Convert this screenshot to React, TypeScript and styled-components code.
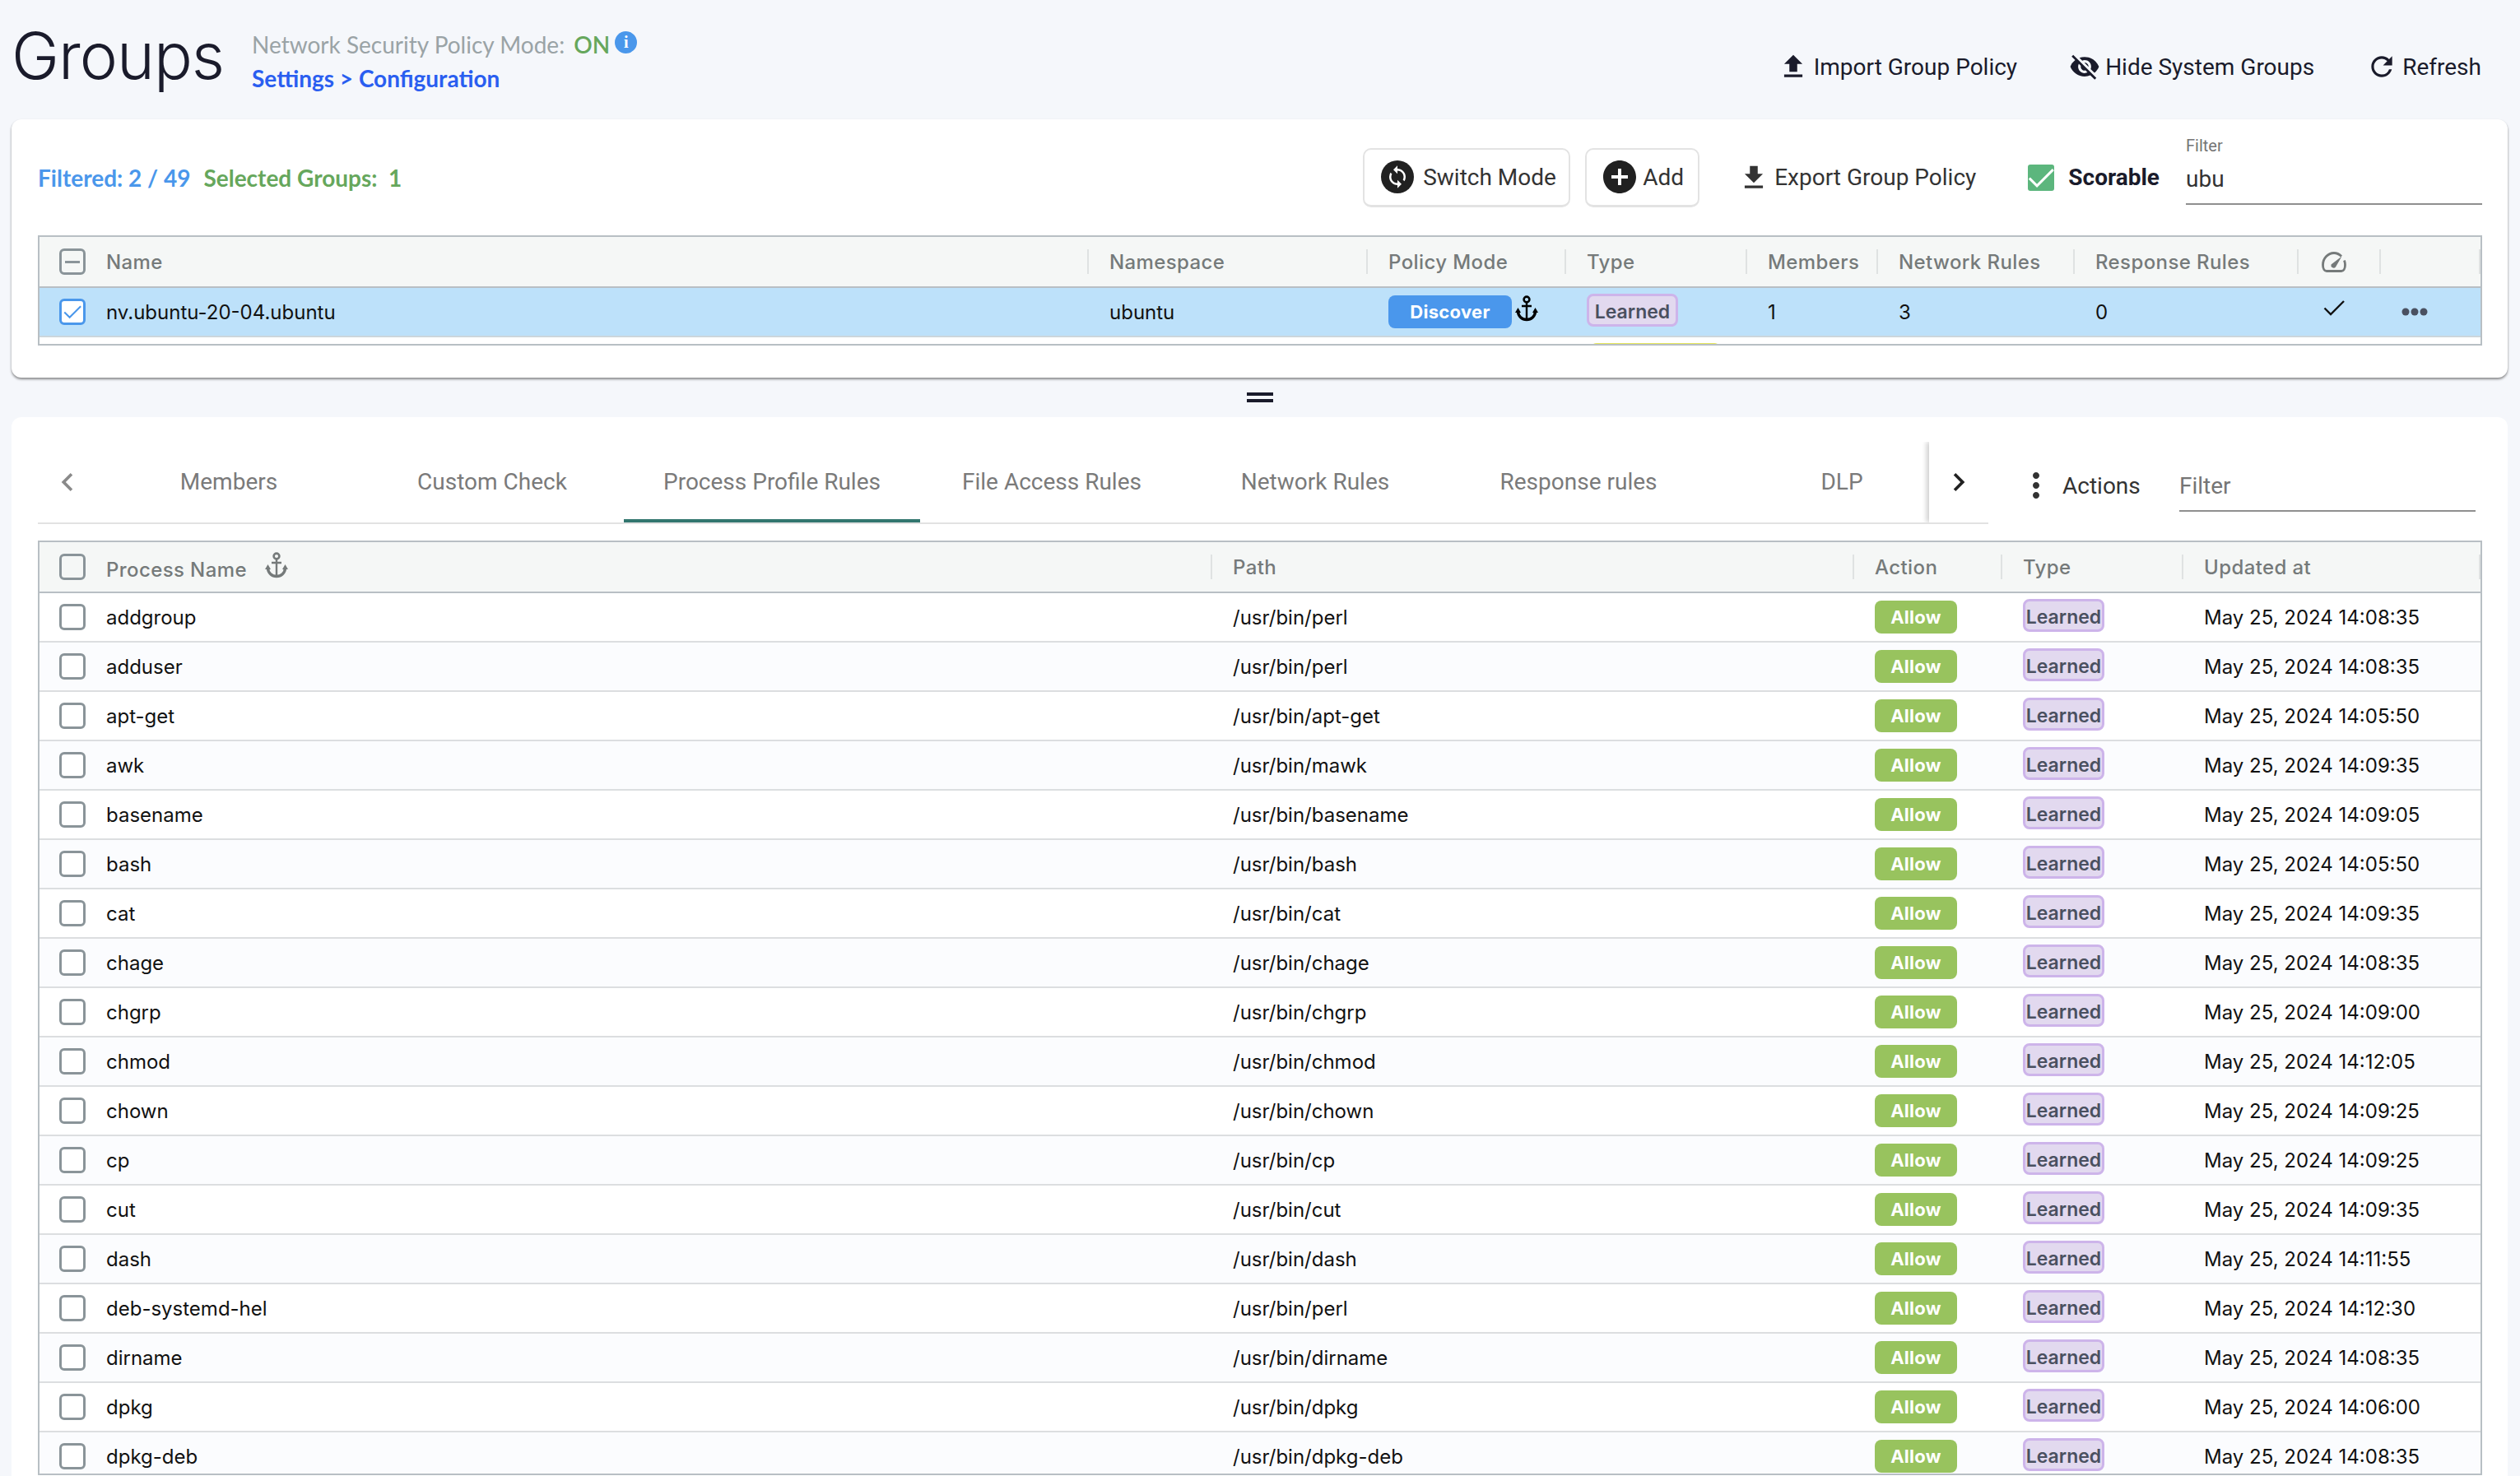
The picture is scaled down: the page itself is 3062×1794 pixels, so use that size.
import styled, { createGlobalStyle } from "styled-components";
import {
  MdAddCircle,
  MdChevronLeft,
  MdChevronRight,
  MdFileDownload,
  MdFileUpload,
  MdMoreVert,
  MdRefresh,
  MdSync,
  MdVisibilityOff,
} from "react-icons/md";

const GROUP_COLUMNS = "1275px 339px 241px 220px 159px 239px 272px 100px 121px";
const RULE_COLUMNS = "1425px 780px 180px 220px 361px";

const rules = [
  ["addgroup", "/usr/bin/perl", "May 25, 2024 14:08:35"],
  ["adduser", "/usr/bin/perl", "May 25, 2024 14:08:35"],
  ["apt-get", "/usr/bin/apt-get", "May 25, 2024 14:05:50"],
  ["awk", "/usr/bin/mawk", "May 25, 2024 14:09:35"],
  ["basename", "/usr/bin/basename", "May 25, 2024 14:09:05"],
  ["bash", "/usr/bin/bash", "May 25, 2024 14:05:50"],
  ["cat", "/usr/bin/cat", "May 25, 2024 14:09:35"],
  ["chage", "/usr/bin/chage", "May 25, 2024 14:08:35"],
  ["chgrp", "/usr/bin/chgrp", "May 25, 2024 14:09:00"],
  ["chmod", "/usr/bin/chmod", "May 25, 2024 14:12:05"],
  ["chown", "/usr/bin/chown", "May 25, 2024 14:09:25"],
  ["cp", "/usr/bin/cp", "May 25, 2024 14:09:25"],
  ["cut", "/usr/bin/cut", "May 25, 2024 14:09:35"],
  ["dash", "/usr/bin/dash", "May 25, 2024 14:11:55"],
  ["deb-systemd-hel", "/usr/bin/perl", "May 25, 2024 14:12:30"],
  ["dirname", "/usr/bin/dirname", "May 25, 2024 14:08:35"],
  ["dpkg", "/usr/bin/dpkg", "May 25, 2024 14:06:00"],
  ["dpkg-deb", "/usr/bin/dpkg-deb", "May 25, 2024 14:08:35"],
];

const tabs = ["Members", "Custom Check", "Process Profile Rules", "File Access Rules", "Network Rules", "Response rules", "DLP"];

const GlobalStyle = createGlobalStyle`
  html, body {
    margin: 0;
    height: 1794px;
    overflow: hidden;
    background: #f5f7fb;
    font-family: Roboto, sans-serif;
    color: #1a1b2b;
  }
`;

const Page = styled.div`
  width: 3062px;
  height: 1794px;
  padding: 0 15px 0 14px;
  box-sizing: border-box;
  overflow: hidden;
`;

const Header = styled.header`
  height: 145px;
  display: flex;
  align-items: flex-start;
`;

const Title = styled.h1`
  margin: 23px 0 0;
  width: 292px;
  font-family: Inter, sans-serif;
  font-weight: 300;
  font-size: 78px;
  line-height: 90px;
  letter-spacing: -1px;
  color: #1a1b2b;
`;

const Subtitle = styled.div`
  margin-top: 36px;
  font-family: Lato, sans-serif;
  font-size: 28px;
`;

const ModeLine = styled.div`
  display: flex;
  align-items: center;
  height: 36px;
  color: #9aa3a6;
`;

const ModeOn = styled.span`
  margin-left: 11px;
  color: #66a75c;
  font-weight: 600;
`;

const InfoDot = styled.span`
  margin: -6px 0 0 6px;
  width: 27px;
  height: 27px;
  border-radius: 50%;
  background: #4a97eb;
  color: #fff;
  font: 700 20px/27px "Liberation Serif", serif;
  text-align: center;
`;

const Crumb = styled.div`
  margin-top: 5px;
  color: #2a5ef0;
  font-weight: 700;
  line-height: 36px;
`;

const HeaderActions = styled.div`
  margin: 62px 32px 0 auto;
  display: flex;
  align-items: center;
  gap: 63px;
`;

const TextAction = styled.div`
  display: flex;
  align-items: center;
  gap: 6px;
  height: 38px;
  font-size: 28px;
  color: #1a1b2b;
  svg {
    flex: none;
  }
`;

const Card = styled.section`
  background: #fff;
  border-radius: 12px;
  padding: 0 31px 0 32px;
`;

const GroupsCard = styled(Card)`
  height: 314px;
  box-sizing: border-box;
  box-shadow: 0 2px 3px rgba(0, 0, 0, 0.45);
`;

const RulesCard = styled(Card)`
  height: 1300px;
`;

const Toolbar = styled.div`
  height: 141px;
  display: flex;
  align-items: center;
`;

const Counts = styled.div`
  display: flex;
  gap: 16px;
  font-family: Lato, sans-serif;
  font-weight: 700;
  font-size: 28px;
`;

const FilteredCount = styled.span`
  color: #4a97eb;
`;

const SelectedCount = styled.span`
  color: #66a75c;
  white-space: pre;
`;

const ToolbarActions = styled.div`
  margin-left: auto;
  align-self: stretch;
  display: flex;
  align-items: center;
`;

const OutlineButton = styled.button<{ $width: number }>`
  width: ${(p) => p.$width}px;
  height: 72px;
  box-sizing: border-box;
  margin-right: 18px;
  padding: 0 0 0 20px;
  display: flex;
  align-items: center;
  gap: 11px;
  background: #fff;
  border: 2px solid #e3e3e3;
  border-bottom-width: 3px;
  border-radius: 10px;
  font: 400 28px Roboto, sans-serif;
  color: #333;
`;

const RoundIcon = styled.span`
  width: 40px;
  height: 40px;
  border-radius: 50%;
  background: #212121;
  color: #fff;
  display: flex;
  align-items: center;
  justify-content: center;
`;

const PlusIcon = styled(MdAddCircle)`
  margin: -4px -7px -4px -4px;
  color: #212121;
`;

const ExportAction = styled(TextAction)`
  margin-left: 29px;
  color: #333;
`;

const ScorableBox = styled.span`
  margin-left: 63px;
  width: 32px;
  height: 32px;
  border-radius: 3px;
  background: #5cb67d;
  display: flex;
`;

const ScorableLabel = styled.span`
  margin-left: 17px;
  font-size: 28px;
  font-weight: 700;
  color: #1a1b2b;
`;

const FilterField = styled.div`
  align-self: flex-start;
  margin: 20px 0 0 32px;
  width: 360px;
  height: 84px;
  box-sizing: border-box;
  border-bottom: 2px solid #8f8f8f;
`;

const FilterLabel = styled.div`
  font-size: 20px;
  line-height: 24px;
  color: #757575;
`;

const FilterValue = styled.div`
  margin-top: 11px;
  font-size: 28px;
  line-height: 36px;
  color: #333;
`;

const TableFrame = styled.div<{ $height: number }>`
  height: ${(p) => p.$height}px;
  box-sizing: border-box;
  border: 2px solid #b8bfc4;
  overflow: hidden;
  font-family: Inter, sans-serif;
`;

const HeadRow = styled.div<{ $columns: string }>`
  display: grid;
  grid-template-columns: ${(p) => p.$columns};
  align-items: center;
  height: 62px;
  box-sizing: border-box;
  background: #f5f7f6;
  border-bottom: 2px solid #b8bfc4;
`;

const HeadCell = styled.div`
  height: 30px;
  box-sizing: border-box;
  padding-left: 25px;
  display: flex;
  align-items: center;
  border-right: 2px solid #dfe2e2;
  font-size: 24px;
  font-weight: 500;
  letter-spacing: 0.4px;
  color: #757a7a;
  white-space: nowrap;
`;

const NameHead = styled(HeadCell)`
  padding-left: 24px;
  gap: 25px;
`;

const GaugeHead = styled(HeadCell)`
  padding-left: 28px;
`;

const ProcessHeadName = styled.span`
  margin-top: 6px;
`;

const AnchorHead = styled.span`
  margin: -4px 0 0 -3px;
  display: flex;
  color: #757a7a;
`;

const BodyRow = styled.div<{ $columns: string; $selected?: boolean; $striped?: boolean }>`
  display: grid;
  grid-template-columns: ${(p) => p.$columns};
  align-items: center;
  height: 60px;
  box-sizing: border-box;
  background: ${(p) => (p.$selected ? "#bde1fa" : p.$striped ? "#fbfcfe" : "#fff")};
  border-bottom: 2px solid ${(p) => (p.$selected ? "#ccd6dc" : "#dcdee0")};
`;

const Cell = styled.div`
  padding-left: 25px;
  display: flex;
  align-items: center;
  font-size: 24px;
  color: #111;
  white-space: nowrap;
`;

const NameCell = styled(Cell)`
  padding-left: 24px;
  gap: 25px;
`;

const IconCell = styled(Cell)`
  padding-left: 30px;
  margin-top: -10px;
`;

const Box = styled.span<{ $checked?: boolean }>`
  flex: none;
  width: 32px;
  height: 32px;
  box-sizing: border-box;
  display: flex;
  align-items: center;
  justify-content: center;
  background: #fff;
  border: 3px solid ${(p) => (p.$checked ? "#4a97eb" : "#8a9499")};
  border-radius: 6px;
`;

const HeadBox = styled(Box)`
  background: transparent;
`;

const Dash = styled.span`
  width: 18px;
  height: 3px;
  background: #8a9499;
`;

const Pill = styled.span<{ $color: string; $width: number }>`
  width: ${(p) => p.$width}px;
  height: 40px;
  border-radius: 8px;
  background: ${(p) => p.$color};
  color: #fff;
  font: 700 22px/40px Inter, sans-serif;
  letter-spacing: 0.3px;
  text-align: center;
`;

const LearnedTag = styled.span<{ $width: number }>`
  width: ${(p) => p.$width}px;
  height: 40px;
  box-sizing: border-box;
  margin-bottom: 4px;
  border: 3px solid #cdb4ea;
  border-radius: 8px;
  background: #e2d9ef;
  color: #4a5060;
  font: 600 23px/38px Inter, sans-serif;
  text-align: center;
`;

const PolicyAnchor = styled.span`
  margin: -8px 0 0 4px;
  display: flex;
  color: #000;
`;

const ClippedRow = styled.div<{ $columns: string }>`
  display: grid;
  grid-template-columns: ${(p) => p.$columns};
  padding-top: 7px;
`;

const ClippedType = styled.div`
  grid-column: 4;
  margin-left: 29px;
  width: 159px;
  height: 40px;
  border-radius: 8px;
  background: #e6e65a;
`;

const Splitter = styled.div`
  height: 48px;
  display: flex;
  flex-direction: column;
  align-items: center;
  justify-content: center;
  gap: 4px;
`;

const SplitterBar = styled.span`
  width: 32px;
  height: 4px;
  background: #1a1b2b;
`;

const TabsBar = styled.div`
  padding-top: 30px;
  height: 130px;
  box-sizing: border-box;
  display: flex;
`;

const TabHeader = styled.div`
  width: 2370px;
  height: 100px;
  box-sizing: border-box;
  display: flex;
  border-bottom: 2px solid #e2e2e2;
`;

const PrevArrow = styled.div`
  flex: none;
  width: 72px;
  box-sizing: border-box;
  padding-left: 14px;
  display: flex;
  align-items: center;
  color: #8a8a8a;
`;

const NextArrow = styled.div`
  flex: none;
  width: 72px;
  display: flex;
  align-items: center;
  justify-content: center;
  color: #212121;
  background: #fff;
  box-shadow: -3px 0 6px rgba(0, 0, 0, 0.2);
  clip-path: inset(0 0 0 -12px);
`;

const TabScroller = styled.div`
  width: 2226px;
  display: flex;
  overflow: hidden;
`;

const Tab = styled.div<{ $active?: boolean }>`
  flex: none;
  width: ${(p) => (p.$active ? 360 : 320)}px;
  height: 98px;
  box-sizing: border-box;
  padding-top: 2px;
  display: flex;
  align-items: center;
  justify-content: center;
  font-size: 28px;
  color: #7a7a7a;
  border-bottom: 4px solid ${(p) => (p.$active ? "#32766f" : "transparent")};
`;

const ActionsMenu = styled.div`
  margin: 0 0 0 34px;
  width: 198px;
  height: 106px;
  display: flex;
  align-items: center;
  gap: 8px;
  font-size: 28px;
  color: #333;
`;

const TabFilter = styled.div`
  margin-top: 1px;
  width: 360px;
  height: 84px;
  box-sizing: border-box;
  padding-top: 36px;
  border-bottom: 2px solid #8f8f8f;
  font-size: 28px;
  color: #757575;
`;

const TableGap = styled.div`
  height: 20px;
`;

function Anchor({ size }: { size: number }) {
  return (
    <svg width={size * 0.875} height={size} viewBox="0 0 28 32" fill="none" stroke="currentColor">
      <circle cx="14" cy="5" r="3.4" strokeWidth="2.6" />
      <path d="M14 8.5V30M8 13h12" strokeWidth="2.4" />
      <path d="M3.5 19c0 6.5 5 10.5 10.5 10.5S24.500 25.500 24.500 19" strokeWidth="3.4" />
      <path d="M0 21l3.500-6 3.500 6zM21 21l3.500-6 3.500 6z" fill="currentColor" stroke="none" />
    </svg>
  );
}

function Gauge() {
  return (
    <svg width="30" height="25" viewBox="0 0 30 25" fill="none">
      <path
        d="M24 5.500C21.500 3 18.500 1.500 15 1.500 7.500 1.500 1.500 8 1.500 16c0 4.500 2 7.500 4.500 7.500h18c2.500 0 4.500-3 4.500-7.500 0-2-.4-3.800-1-5.500"
        stroke="#757a7a"
        strokeWidth="2.800"
      />
      <path d="M11.500 15.500L24.500 5.500 17 18.500a3.200 3.200 0 0 1-5.500-3z" fill="#757a7a" />
    </svg>
  );
}

function Tick({ color, size }: { color: string; size: number }) {
  return (
    <svg width={size} height={size} viewBox="0 0 26 20" fill="none">
      <path d="M1.500 10.500L9 18 25 2" stroke={color} strokeWidth="2.400" />
    </svg>
  );
}

function Dots() {
  return (
    <svg width="32" height="10" viewBox="0 0 32 10" fill="#4a5060">
      <circle cx="5" cy="5" r="4.500" />
      <circle cx="16" cy="5" r="4.500" />
      <circle cx="27" cy="5" r="4.500" />
    </svg>
  );
}

function GroupsTable() {
  return (
    <TableFrame $height={134}>
      <HeadRow $columns={GROUP_COLUMNS}>
        <NameHead>
          <HeadBox>
            <Dash />
          </HeadBox>
          Name
        </NameHead>
        <HeadCell>Namespace</HeadCell>
        <HeadCell>Policy Mode</HeadCell>
        <HeadCell>Type</HeadCell>
        <HeadCell>Members</HeadCell>
        <HeadCell>Network Rules</HeadCell>
        <HeadCell>Response Rules</HeadCell>
        <GaugeHead>
          <Gauge />
        </GaugeHead>
        <HeadCell />
      </HeadRow>
      <BodyRow $columns={GROUP_COLUMNS} $selected>
        <NameCell>
          <Box $checked>
            <Tick color="#4a97eb" size={22} />
          </Box>
          nv.ubuntu-20-04.ubuntu
        </NameCell>
        <Cell>ubuntu</Cell>
        <Cell>
          <Pill $color="#4a97ec" $width={150}>
            Discover
          </Pill>
          <PolicyAnchor>
            <Anchor size={32} />
          </PolicyAnchor>
        </Cell>
        <Cell>
          <LearnedTag $width={111}>Learned</LearnedTag>
        </Cell>
        <Cell>1</Cell>
        <Cell>3</Cell>
        <Cell>0</Cell>
        <IconCell>
          <Tick color="#111" size={26} />
        </IconCell>
        <Cell>
          <Dots />
        </Cell>
      </BodyRow>
      <ClippedRow $columns={GROUP_COLUMNS}>
        <ClippedType />
      </ClippedRow>
    </TableFrame>
  );
}

function RulesTable() {
  return (
    <TableFrame $height={1136}>
      <HeadRow $columns={RULE_COLUMNS}>
        <NameHead>
          <HeadBox />
          <ProcessHeadName>Process Name</ProcessHeadName>
          <AnchorHead>
            <Anchor size={32} />
          </AnchorHead>
        </NameHead>
        <HeadCell>Path</HeadCell>
        <HeadCell>Action</HeadCell>
        <HeadCell>Type</HeadCell>
        <HeadCell>Updated at</HeadCell>
      </HeadRow>
      {rules.map(([name, path, updated], i) => (
        <BodyRow key={name} $columns={RULE_COLUMNS} $striped={i % 2 === 1}>
          <NameCell>
            <Box />
            {name}
          </NameCell>
          <Cell>{path}</Cell>
          <Cell>
            <Pill $color="#98c35e" $width={100}>
              Allow
            </Pill>
          </Cell>
          <Cell>
            <LearnedTag $width={99}>Learned</LearnedTag>
          </Cell>
          <Cell>{updated}</Cell>
        </BodyRow>
      ))}
    </TableFrame>
  );
}

export default function App() {
  return (
    <Page>
      <GlobalStyle />
      <Header>
        <Title>Groups</Title>
        <Subtitle>
          <ModeLine>
            Network Security Policy Mode:
            <ModeOn>ON</ModeOn>
            <InfoDot>i</InfoDot>
          </ModeLine>
          <Crumb>Settings &gt; Configuration</Crumb>
        </Subtitle>
        <HeaderActions>
          <TextAction>
            <MdFileUpload size={38} />
            Import Group Policy
          </TextAction>
          <TextAction>
            <MdVisibilityOff size={38} />
            Hide System Groups
          </TextAction>
          <TextAction>
            <MdRefresh size={38} />
            Refresh
          </TextAction>
        </HeaderActions>
      </Header>

      <GroupsCard>
        <Toolbar>
          <Counts>
            <FilteredCount>Filtered: 2 / 49</FilteredCount>
            <SelectedCount>Selected Groups:  1</SelectedCount>
          </Counts>
          <ToolbarActions>
            <OutlineButton $width={252}>
              <RoundIcon>
                <MdSync size={30} />
              </RoundIcon>
              Switch Mode
            </OutlineButton>
            <OutlineButton $width={139}>
              <PlusIcon size={48} />
              Add
            </OutlineButton>
            <ExportAction>
              <MdFileDownload size={38} />
              Export Group Policy
            </ExportAction>
            <ScorableBox>
              <Tick color="#fff" size={32} />
            </ScorableBox>
            <ScorableLabel>Scorable</ScorableLabel>
            <FilterField>
              <FilterLabel>Filter</FilterLabel>
              <FilterValue>ubu</FilterValue>
            </FilterField>
          </ToolbarActions>
        </Toolbar>
        <GroupsTable />
      </GroupsCard>

      <Splitter>
        <SplitterBar />
        <SplitterBar />
      </Splitter>

      <RulesCard>
        <TabsBar>
          <TabHeader>
            <PrevArrow>
              <MdChevronLeft size={44} />
            </PrevArrow>
            <TabScroller>
              {tabs.map((tab) => (
                <Tab key={tab} $active={tab === "Process Profile Rules"}>
                  {tab}
                </Tab>
              ))}
            </TabScroller>
            <NextArrow>
              <MdChevronRight size={44} />
            </NextArrow>
          </TabHeader>
          <ActionsMenu>
            <MdMoreVert size={48} />
            Actions
          </ActionsMenu>
          <TabFilter>Filter</TabFilter>
        </TabsBar>
        <TableGap />
        <RulesTable />
      </RulesCard>
    </Page>
  );
}
